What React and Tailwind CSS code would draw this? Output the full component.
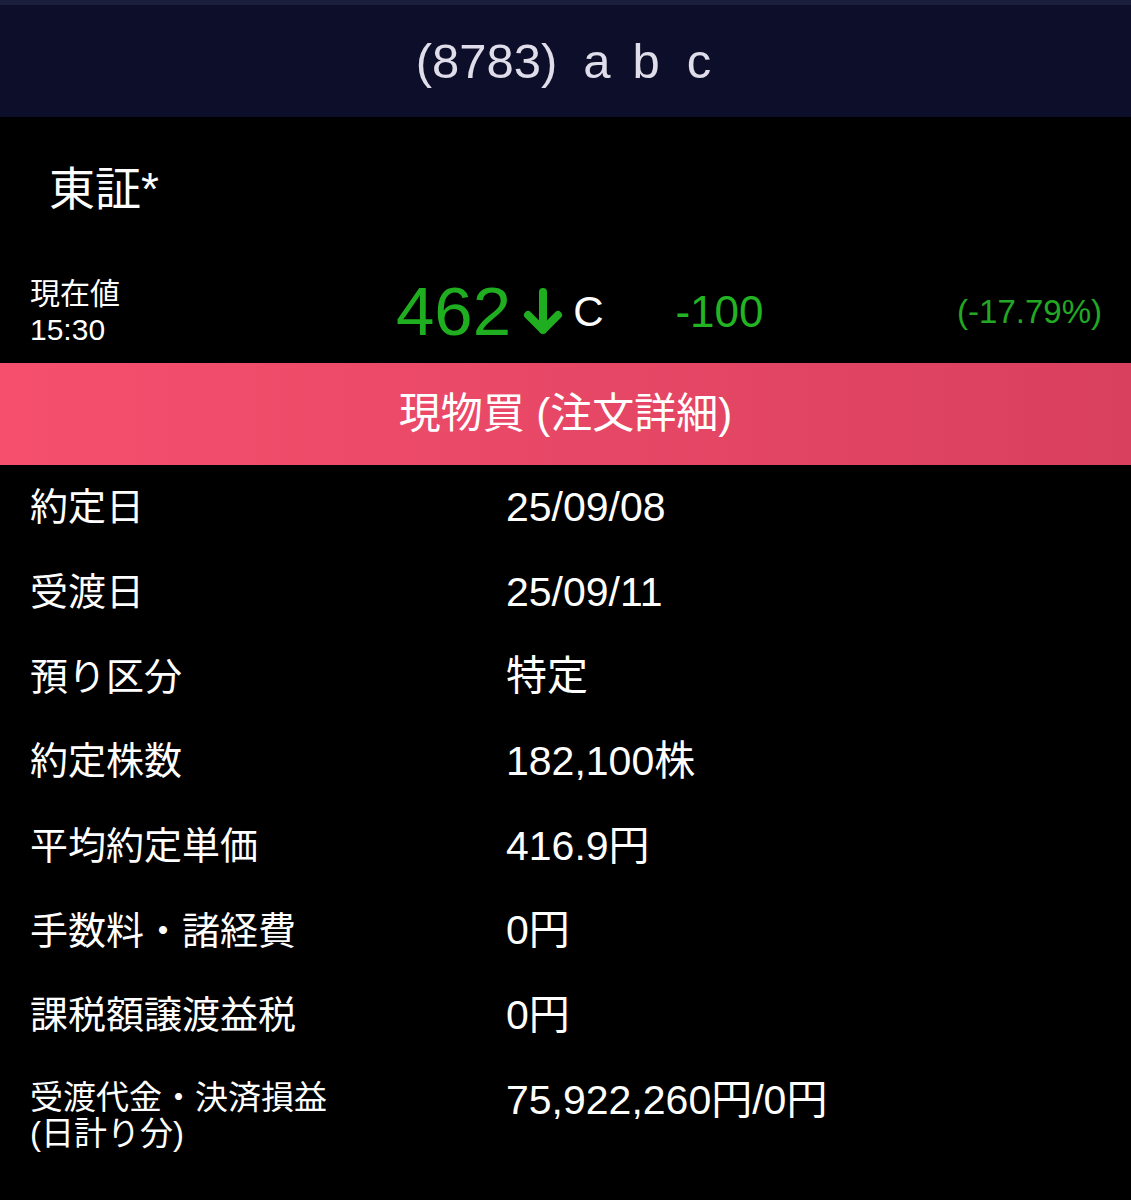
import React from "react";

const FONT = { fontFamily: '"Liberation Sans", "Noto Sans CJK JP", sans-serif' };

const rows = [
  ["約定日", "25/09/08"],
  ["受渡日", "25/09/11"],
  ["預り区分", "特定"],
  ["約定株数", "182,100株"],
  ["平均約定単価", "416.9円"],
  ["手数料・諸経費", "0円"],
  ["課税額譲渡益税", "0円"],
];

function DownArrow() {
  return (
    <svg width="42" height="48" viewBox="0 0 42 48" className="shrink-0">
      <path
        d="M21 4 V42 M6 27 L21 42 L36 27"
        fill="none"
        stroke="#1fae1f"
        strokeWidth="8"
        strokeLinecap="round"
        strokeLinejoin="round"
      />
    </svg>
  );
}

export default function App() {
  return (
    <div className="w-[1131px] h-[1200px] bg-black text-white overflow-hidden" style={FONT}>
      <div className="h-[5px] bg-[#1b1e3c]" />
      <div className="h-[112px] bg-[#0d0e29] flex items-center justify-center pr-[4px] text-[49px] text-[#dedde9] leading-none">
        <span>(8783)</span>
        <span className="ml-[26px]">a</span>
        <span className="ml-[22px]">b</span>
        <span className="ml-[27px]">c</span>
      </div>

      <div className="h-[143px] flex items-center pl-[49px] text-[46px] leading-none">東証*</div>

      <div className="h-[103px] flex items-center">
        <div className="w-[396px] pl-[30px] text-[30px] leading-[36px]">
          <div>現在値</div>
          <div>15:30</div>
        </div>
        <div className="flex items-center">
          <span className="text-[69px] leading-none text-[#1fae1f]">462</span>
          <span className="ml-[11px]"><DownArrow /></span>
          <span className="ml-[9px] text-[42px] leading-none text-white">C</span>
        </div>
        <span className="ml-[72px] text-[44px] leading-none text-[#22b422]">-100</span>
        <span className="ml-auto mr-[29px] text-[33px] leading-none text-[#22a822]">(-17.79%)</span>
      </div>

      <div className="h-[102px] flex items-center justify-center bg-gradient-to-r from-[#f64f6e] to-[#d9405e] text-[42px] leading-none text-white">
        現物買 (注文詳細)
      </div>

      {rows.map(([k, v]) => (
        <div key={k} className="h-[84.7px] flex items-center">
          <div className="w-[506px] pl-[30px] text-[38px] leading-none">{k}</div>
          <div className="text-[41px] leading-none">{v}</div>
        </div>
      ))}
      <div className="h-[84.7px] flex items-start pt-[22px]">
        <div className="w-[506px] pl-[30px] text-[33px] leading-[36px]">
          <div>受渡代金・決済損益</div>
          <div>(日計り分)</div>
        </div>
        <div className="text-[41px] leading-[40px]">75,922,260円/0円</div>
      </div>
    </div>
  );
}
